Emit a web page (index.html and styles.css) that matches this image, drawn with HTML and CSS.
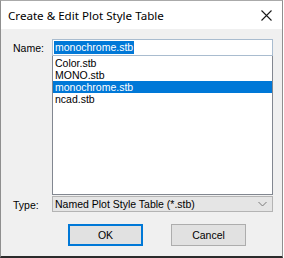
FILE: index.html
```
<!DOCTYPE html>
<html lang="en">
<head>
    <meta charset="UTF-8">
    <title>Create &amp; Edit Plot Style Table</title>
    <link rel="stylesheet" href="styles.css">
</head>
<body>
    <div class="dialog">
        <div class="titlebar">
            <span class="title">Create &amp; Edit Plot Style Table</span>
            <svg class="close" width="11" height="11" viewBox="0 0 11 11">
                <path d="M0.5 0.5 L10.5 10.5 M10.5 0.5 L0.5 10.5" stroke="#1a1a1a" stroke-width="1.1" fill="none"/>
            </svg>
        </div>
        <div class="form">
            <label class="lbl">Name:</label>
            <div class="name-box"><span class="sel">monochrome.stb</span></div>
            <span></span>
            <ul class="list">
                <li>Color.stb</li>
                <li>MONO.stb</li>
                <li class="active">monochrome.stb</li>
                <li>ncad.stb</li>
            </ul>
            <label class="lbl type-lbl">Type:</label>
            <div class="combo">
                <span>Named Plot Style Table (*.stb)</span>
                <svg width="9" height="6" viewBox="0 0 9 6">
                    <path d="M0.5 1 L4.5 5 L8.5 1" stroke="#7a7a7a" stroke-width="1" fill="none"/>
                </svg>
            </div>
        </div>
        <div class="buttons">
            <button class="btn default">OK</button>
            <button class="btn">Cancel</button>
        </div>
    </div>
</body>
</html>
```
FILE: styles.css
```
body {
    margin: 0;
    background-color: #fff;
}
.dialog {
    width: 283px;
    height: 258px;
    box-sizing: border-box;
    border: 1px solid #8f8f8f;
    border-top-color: #aaa;
    border-bottom: 2px solid #2b2b2b;
    background-color: #f0f0f0;
    display: flex;
    flex-direction: column;
    font-family: "Liberation Sans", Arial, sans-serif;
    font-size: 10.5px;
    color: #000;
}
.titlebar {
    height: 28px;
    flex: none;
    background-color: #fff;
    display: flex;
    align-items: center;
    justify-content: space-between;
    padding: 0 10px 0 7px;
}
.title {
    font-family: "Noto Sans", "Open Sans", sans-serif;
    font-size: 11.6px;
    color: #000;
}
.close {
    margin-top: 1px;
}
.form {
    display: grid;
    grid-template-columns: 39px 221px;
    padding: 10px 0 0 12px;
}
.lbl {
    display: flex;
    align-items: center;
    padding-top: 1px;
}
.name-box {
    height: 17px;
    box-sizing: border-box;
    border: 1px solid #a9bccf;
    background-color: #fff;
    display: flex;
    align-items: center;
    padding-left: 1px;
}
.sel {
    background-color: #0078d7;
    color: #fff;
    line-height: 13px;
    padding: 0 1px;
}
.list {
    list-style: none;
    margin: 0;
    padding: 1px 0 0 0;
    height: 139px;
    box-sizing: border-box;
    border: 1px solid #828790;
    border-top: none;
    background-color: #fff;
}
.list li {
    height: 12px;
    line-height: 12px;
    padding-left: 2px;
}
.list li.active {
    background-color: #0078d7;
    color: #fff;
}
.type-lbl {
    padding-top: 3px;
}
.combo {
    height: 16px;
    margin-top: 1px;
    box-sizing: border-box;
    border: 1px solid #b4b4b4;
    background-color: #e5e5e5;
    display: flex;
    align-items: center;
    justify-content: space-between;
    padding: 0 5px 0 2px;
    color: #000;
}
.buttons {
    display: flex;
    gap: 28px;
    padding: 12px 0 0 67px;
}
.btn {
    width: 75px;
    height: 22px;
    box-sizing: border-box;
    border: 1px solid #adadad;
    background-color: #e1e1e1;
    font-family: "Liberation Sans", Arial, sans-serif;
    font-size: 10.5px;
    color: #000;
    padding: 0;
}
.btn.default {
    border: 2px solid #0078d7;
}
```
